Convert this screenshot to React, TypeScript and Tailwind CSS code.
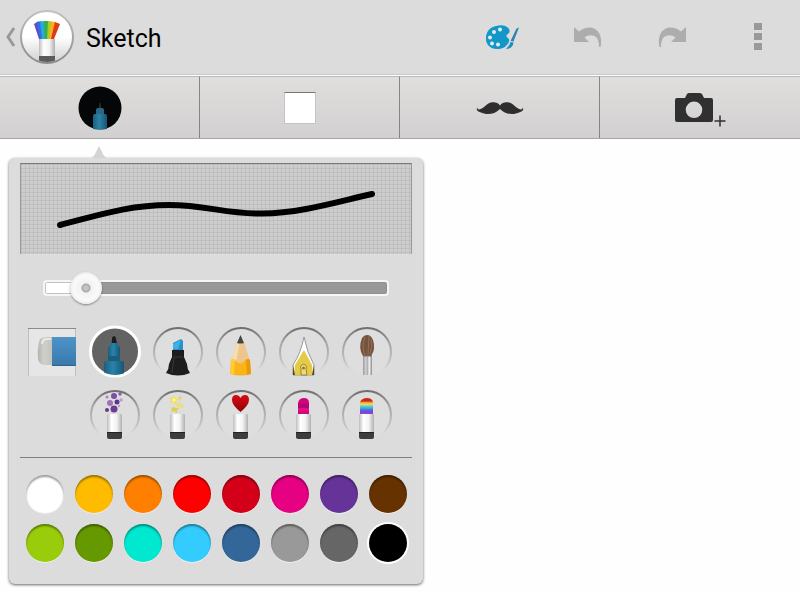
import { useState } from 'react'
import type { CSSProperties, ReactNode } from 'react'
import clsx from 'clsx'

const COLORS = [
  { name: 'White', hex: '#ffffff' },
  { name: 'Amber', hex: '#ffbb00' },
  { name: 'Orange', hex: '#ff8000' },
  { name: 'Red', hex: '#ff0000' },
  { name: 'Crimson', hex: '#d4001a' },
  { name: 'Magenta', hex: '#e60082' },
  { name: 'Purple', hex: '#663399' },
  { name: 'Brown', hex: '#663300' },
  { name: 'Lime', hex: '#99cc0a' },
  { name: 'Green', hex: '#669900' },
  { name: 'Turquoise', hex: '#00e8d0' },
  { name: 'Sky blue', hex: '#33ccff' },
  { name: 'Blue', hex: '#336699' },
  { name: 'Light gray', hex: '#999999' },
  { name: 'Dark gray', hex: '#666666' },
  { name: 'Black', hex: '#000000' },
]

// White handle shared by all the effect brushes
function Cap() {
  return (
    <>
      <rect x="17" y="24" width="15" height="19" rx="1" fill="url(#cap)" />
      <path d="M17 42h15v5q0 2-2 2H19q-2 0-2-2Z" fill="#3d3d3d" />
      <path d="M17 42h15v1H17z" fill="#222" />
    </>
  )
}

const TOOLS: { id: string; label: string; art: ReactNode }[] = [
  {
    id: 'pen',
    label: 'Pen',
    art: (
      <g clipPath="url(#round)">
        <path d="M21.500 17 22.200 10.500Q24 7.500 25.800 10.500L27 17Z" fill="#1b1b1f" />
        <path d="M18 21V20L20 19V16H28V19L30 20V34H18Z" fill="url(#teal)" />
        <path d="M18 29h12v5H18z" fill="#1a5e7c" />
        <path d="M14 50V36Q14 34 16 34H32Q34 34 34 36V50Z" fill="url(#teal)" />
      </g>
    ),
  },
  {
    id: 'highlighter',
    label: 'Highlighter',
    art: (
      <>
        <path d="M20 23V16L28 12L30 14V23Z" fill="#2590cb" />
        <path d="M20 17L28 13L25 22H20Z" fill="#3fb0e6" />
        <path d="M19 23H31V30L34 37Q34 42 37 46Q25 51 13 46Q16 42 16 37L19 30Z" fill="#1d1d1d" />
        <path d="M20 30H30M21 31L19 46" fill="none" stroke="#3a3a3a" />
      </>
    ),
  },
  {
    id: 'pencil',
    label: 'Pencil',
    art: (
      <>
        <path d="M21 15L15 35L20 38L34 34L28 15Z" fill="#ecc68d" />
        <path d="M24 15H21L15 35H20Z" fill="#f6dcae" />
        <path d="M24.500 8L28 16Q24 17 21 16Z" fill="#444" />
        <path d="M15 33Q17 31 20 34Q24 39 28 34Q31 31 34 33L35 47Q25 50 14 47Z" fill="#fbb415" />
        <path d="M30 33Q32 31 34 33L35 47L31 48Z" fill="#e99a0c" />
        <path d="M15 33Q17 31 19 33L18 48L14 47Z" fill="#ffca3c" />
      </>
    ),
  },
  {
    id: 'nib',
    label: 'Fountain pen',
    art: (
      <>
        <path d="M25 10Q28 26 35 38V48H14V38Q22 26 25 10Z" fill="#fff" stroke="#777" strokeWidth="0.700" />
        <path d="M25 23L33 38L34 48H15L16 38Z" fill="#e5cb45" />
        <path d="M14 38L16 48H14ZM35 38L33 48H35Z" fill="#554a1d" />
        <path d="M22 42a3 3 0 1 1 5 0l1 6h-6Z" fill="#f1dc74" stroke="#8d7c3a" strokeWidth="0.900" />
        <circle cx="24.500" cy="41" r="1.500" fill="#8a7a3c" />
      </>
    ),
  },
  {
    id: 'brush',
    label: 'Paint brush',
    art: (
      <>
        <path d="M21 28H30V48H21Z" fill="url(#metal)" />
        <path d="M25 8Q29 8 31 13Q34 22 29 29H21Q16 21 20 11Q22 8 25 8Z" fill="#76533d" />
        <path d="M23 10Q19 19 23 28M27 9L26 28M29 12Q31 20 28 27" fill="none" stroke="#987360" strokeWidth="0.900" />
        <path d="M21 29H30" stroke="#777" />
      </>
    ),
  },
  {
    id: 'bubbles',
    label: 'Bubbles',
    art: (
      <>
        <circle cx="24" cy="6" r="3" fill="#7d4fa0" />
        <circle cx="20" cy="13" r="3" fill="#9b74b8" />
        <circle cx="27" cy="12" r="2.500" fill="#5f3289" />
        <circle cx="24" cy="19" r="3.500" fill="#6b3b95" />
        <circle cx="17" cy="7" r="1.500" fill="#a585bd" />
        <circle cx="30" cy="4" r="1.700" fill="#8a5faa" />
        <circle cx="31" cy="10" r="1.700" fill="#b89fcb" />
        <circle cx="17" cy="20" r="2" fill="#673a87" />
        <circle cx="29" cy="16" r="1.200" fill="#b89fcb" />
        <Cap />
      </>
    ),
  },
  {
    id: 'stars',
    label: 'Stars',
    art: (
      <>
        <path d="M21 5L22.500 8L26 9L23 11L23 15L20 12L17 13L18 10L16 7L19 8Z" fill="#efe25c" />
        <path d="M27 5L28 7L30 8L28 9L27 11L26 9L24 8L26 7Z" fill="#e2d67e" />
        <path d="M25 12L26 14L29 13L30 15L32 16L29 18L27 17L24 19L24 16L22 14Z" fill="#e9df7c" />
        <path d="M21 16L22 18L26 18L24 20L24 23L21 21L18 22L19 19L17 17L20 18Z" fill="#ded04d" />
        <circle cx="21" cy="10" r="1.500" fill="#fdf9a8" />
        <Cap />
      </>
    ),
  },
  {
    id: 'hearts',
    label: 'Hearts',
    art: (
      <>
        <path d="M24.500 22Q16 15 16 10Q16 5 20 5Q23 5 24.500 8Q26 5 29 5Q33 5 33 10Q33 15 24.500 22Z" fill="url(#heart)" />
        <Cap />
      </>
    ),
  },
  {
    id: 'lipstick',
    label: 'Lipstick',
    art: (
      <>
        <path d="M19 25V13Q20 8 25 8Q30 8 30 13V25Z" fill="#d0067d" />
        <path d="M19 13Q24 15 30 13V18H19Z" fill="#b80470" />
        <path d="M19 18H30V21H19Z" fill="#e01082" />
        <Cap />
      </>
    ),
  },
  {
    id: 'rainbow',
    label: 'Rainbow',
    art: (
      <>
        <path d="M18 25V12Q20 8 25 8Q30 8 31 12V25Z" fill="url(#rainbow)" />
        <Cap />
      </>
    ),
  },
]

// Gradients and clips used by every icon on the page
function Defs() {
  return (
    <svg className="absolute size-0" aria-hidden="true">
      <defs>
        <clipPath id="round"><circle cx="25" cy="24" r="24" /></clipPath>
        <clipPath id="badge"><circle cx="27" cy="27" r="25" /></clipPath>
        <linearGradient id="ring" x1="0" y1="0" x2="0" y2="1">
          <stop offset="0" stopColor="#6e6e6e" />
          <stop offset="0.300" stopColor="#a4a4a4" />
          <stop offset="0.650" stopColor="#bdbdbd" />
          <stop offset="0.880" stopColor="#dcdcdc" />
        </linearGradient>
        <linearGradient id="teal">
          <stop offset="0" stopColor="#1b5f80" />
          <stop offset="0.450" stopColor="#2a83a8" />
          <stop offset="1" stopColor="#175574" />
        </linearGradient>
        <linearGradient id="cap">
          <stop offset="0" stopColor="#bdbdbd" />
          <stop offset="0.300" stopColor="#fff" />
          <stop offset="0.650" stopColor="#f2f2f2" />
          <stop offset="1" stopColor="#b0b0b0" />
        </linearGradient>
        <linearGradient id="metal">
          <stop offset="0" stopColor="#9a9a9a" />
          <stop offset="0.300" stopColor="#cfcfcf" />
          <stop offset="0.500" stopColor="#b3b3b3" />
          <stop offset="0.700" stopColor="#f2f2f2" />
          <stop offset="1" stopColor="#8a8a8a" />
        </linearGradient>
        <linearGradient id="heart" x1="0" y1="0" x2="0" y2="1">
          <stop offset="0" stopColor="#d90a12" />
          <stop offset="1" stopColor="#8e0308" />
        </linearGradient>
        <linearGradient id="rainbow" x1="0" y1="0" x2="0" y2="1">
          <stop offset="0.180" stopColor="#c9281c" />
          <stop offset="0.250" stopColor="#f5952a" />
          <stop offset="0.360" stopColor="#f3df57" />
          <stop offset="0.480" stopColor="#5cd3c4" />
          <stop offset="0.620" stopColor="#3d9de8" />
          <stop offset="0.750" stopColor="#6a4fd8" />
          <stop offset="1" stopColor="#8a45cf" />
        </linearGradient>
        <linearGradient id="badgeFill" x1="0" y1="0" x2="0" y2="1">
          <stop offset="0.500" stopColor="#fff" />
          <stop offset="1" stopColor="#cfcfcf" />
        </linearGradient>
        <linearGradient id="badgeRing" x1="0" y1="0" x2="0" y2="1">
          <stop offset="0" stopColor="#c0c0c0" />
          <stop offset="1" stopColor="#8c8c8c" />
        </linearGradient>
        <linearGradient id="eraser" x1="0" y1="0" x2="0" y2="1">
          <stop offset="0" stopColor="#4d94c8" />
          <stop offset="1" stopColor="#3a78ab" />
        </linearGradient>
        <linearGradient id="rubber">
          <stop offset="0" stopColor="#b4b4af" />
          <stop offset="0.400" stopColor="#d0d0cb" />
          <stop offset="1" stopColor="#c2c2bd" />
        </linearGradient>
      </defs>
    </svg>
  )
}

function Logo() {
  return (
    <svg width="54" height="54" viewBox="0 0 54 54" aria-hidden="true">
      <circle cx="27" cy="27" r="26" fill="url(#badgeFill)" stroke="url(#badgeRing)" strokeWidth="2" />
      <g clipPath="url(#badge)">
        <path d="M19 29L14 14L18 11.500L23 29Z" fill="#6a45c4" />
        <path d="M20 29L16.500 12L21 11L25 29Z" fill="#2f6fe0" />
        <path d="M22 29L20 11.500L25 11L27 29Z" fill="#27a9dc" />
        <path d="M25 29L24 11H29L29 29Z" fill="#38ae49" />
        <path d="M27 29L28 11L32 11.500L31 29Z" fill="#a7ca30" />
        <path d="M29 29L31 11.500L36 12L33 29Z" fill="#f6b217" />
        <path d="M31 29L35 12L40 14L34 29Z" fill="#dd3b18" />
        <rect x="19" y="29" width="16" height="18" fill="url(#cap)" />
        <rect x="19" y="46" width="16" height="8" fill="#5b5b5b" />
      </g>
    </svg>
  )
}

function PaletteIcon() {
  return (
    <svg width="35" height="26" viewBox="0 0 35 26" aria-hidden="true">
      <path
        d="M14 1.500C20 .5 25 4 24.500 7.500C24.500 10 21 10 21.500 12.500C22 14 25 14 24 17.500C22 22.500 18 25 12 25C5 25 .5 20 1 14C1 7 6 2 14 1.500Z"
        fill="#1396c8"
      />
      <g fill="#e2eef3">
        <circle cx="15" cy="5.500" r="2" />
        <circle cx="9" cy="8" r="2" />
        <circle cx="5" cy="13.500" r="2" />
        <circle cx="7" cy="19.500" r="2" />
        <circle cx="13" cy="20.500" r="2" />
      </g>
      <path d="M34 3.500L28.500 17.500L25.500 17L31.500 4.500Z" fill="#2b85b0" />
      <path d="M25.500 18L28.500 18.500Q28 24.500 21 25Q24.500 22 25.500 18Z" fill="#1a8fc0" />
    </svg>
  )
}

function UndoIcon({ flip }: { flip?: boolean }) {
  return (
    <svg width="29" height="24" viewBox="0 0 29 24" className={clsx(flip && '-scale-x-100')} aria-hidden="true">
      <path
        d="M1 2L6 6.500C10 3 14 2 18 2.500C25 3.500 30 11 27.500 22H26C26 15 24 11 19 10.500C16 10 14 11 11.500 12.500L16 17H1Z"
        fill="#adadad"
      />
    </svg>
  )
}

function MenuIcon() {
  return (
    <svg width="8" height="28" viewBox="0 0 8 28" fill="#999" aria-hidden="true">
      <rect width="8" height="7" />
      <rect y="10" width="8" height="7" />
      <rect y="20" width="8" height="7" />
    </svg>
  )
}

function MustacheIcon() {
  return (
    <svg width="48" height="14" viewBox="0 0 48 14" fill="#2e2e2e" aria-hidden="true">
      <path d="M24 4.500C22 1.500 19 1 15 1.500C10 2.500 8 8 3 8.500C1.500 8 1 7.500 1.500 6C0 8 .5 10 5 11.500C9 13.500 18 14.500 24 8C30 14.500 39 13.500 43 11.500C47.500 10 48 8 46.500 6C47 7.500 46.500 8 45 8.500C40 8 38 2.500 33 1.500C29 1 26 1.500 24 4.500Z" />
    </svg>
  )
}

function CameraIcon() {
  return (
    <svg width="53" height="38" viewBox="0 -3 53 38" aria-hidden="true">
      <path
        fillRule="evenodd"
        fill="#303030"
        d="M3 6H11L13 2Q14 1 15 1H25Q27 1 28 2L30 6H37Q39 6 39 8V28Q39 30 37 30H3Q1 30 1 28V8Q1 6 3 6ZM20 9.500A8.300 8.300 0 1 0 20 26.100A8.300 8.300 0 1 0 20 9.500Z"
      />
      <path d="M46 23.500V34.500M40.500 29H51.500" stroke="#303030" strokeWidth="1.500" />
    </svg>
  )
}

function ActivePenIcon() {
  return (
    <svg width="44" height="44" viewBox="0 0 44 44" aria-hidden="true">
      <circle cx="22" cy="22" r="21.500" fill="#050607" />
      <path d="M21 22L21.500 17H22.500L23 22Z" fill="#333" />
      <path d="M18 28V24Q18 22 20 22H24Q26 22 26 24V28Z" fill="#2b6886" />
      <path d="M15 43V30Q15 28 17 28H27Q29 28 29 30V43Q22 44 15 43Z" fill="url(#teal)" />
    </svg>
  )
}

function ToolButton({ label, selected, onClick, first, children }: {
  label: string
  selected: boolean
  onClick: () => void
  first?: boolean
  children: ReactNode
}) {
  return (
    <button
      type="button"
      aria-label={label}
      aria-pressed={selected}
      onClick={onClick}
      className={clsx('size-[50px] cursor-pointer', first && 'col-start-2')}
    >
      <svg width="50" height="50" viewBox="0 0 50 50" className="overflow-visible" aria-hidden="true">
        {selected ? (
          <circle cx="25" cy="24.500" r="24.500" fill="#636363" stroke="#fff" strokeWidth="3" />
        ) : (
          <circle cx="25" cy="25" r="24" fill="#dedede" stroke="url(#ring)" strokeWidth="2" />
        )}
        {children}
      </svg>
    </button>
  )
}

function SizeSlider({ value, onChange }: { value: number; onChange: (v: number) => void }) {
  return (
    <input
      type="range"
      aria-label="Brush size"
      min={0}
      max={100}
      value={value}
      onChange={e => onChange(Number(e.target.value))}
      style={{ '--fill': `${value + 4}%` } as CSSProperties}
      className="mx-[23px] mt-[18px] block h-8 cursor-pointer appearance-none bg-transparent [&::-webkit-slider-runnable-track]:h-4 [&::-webkit-slider-runnable-track]:rounded [&::-webkit-slider-runnable-track]:border-2 [&::-webkit-slider-runnable-track]:border-[#f6f6f6] [&::-webkit-slider-runnable-track]:bg-[linear-gradient(to_right,#fff_var(--fill),#999_var(--fill))] [&::-webkit-slider-runnable-track]:shadow-[inset_0_0_0_1px_#8a8a8a80] [&::-webkit-slider-thumb]:-mt-[10px] [&::-webkit-slider-thumb]:size-8 [&::-webkit-slider-thumb]:appearance-none [&::-webkit-slider-thumb]:rounded-full [&::-webkit-slider-thumb]:bg-[radial-gradient(circle,#c4c4c4_2px,#a6a6a6_4px,#f2f2f2_5px,#fafafa_13px,#e8e8e8_16px)] [&::-webkit-slider-thumb]:shadow-[0_1px_2px_#00000066]"
    />
  )
}

function BrushPanel() {
  const [tool, setTool] = useState('pen')
  const [color, setColor] = useState('#000000')
  const [size, setSize] = useState(8)

  return (
    <section
      aria-label="Brush settings"
      className="relative mt-[19px] ml-[9px] flex w-[414px] max-w-full flex-col rounded-md bg-[#dcdcdc] px-[11px] pt-[5px] pb-[17px] shadow-[0_1px_3px_#00000099]"
    >
      <svg width="16" height="12" viewBox="0 0 16 12" className="absolute -top-3 left-[82px]" aria-hidden="true">
        <path d="M0 12Q3 11 5 6L8 0L11 6Q13 11 16 12Z" fill="#d4d4d4" />
      </svg>

      {/* Stroke preview */}
      <div className="border-t border-r border-l border-t-[#777] border-r-[#999] border-l-[#999] bg-[#cdcdcd] bg-[linear-gradient(#0000000f_1px,transparent_1px),linear-gradient(to_right,#0000000f_1px,transparent_1px)] bg-[size:4px_4px]">
        <svg viewBox="0 0 390 90" className="block w-full" aria-label="Stroke preview" role="img">
          <path
            d="M39 61C72 53 105 41 148 41C185 41 205 50 241 49.500C280 49 315 38 351 30"
            fill="none"
            stroke={color}
            strokeWidth={Math.max(1, size - 2)}
            strokeLinecap="round"
          />
        </svg>
      </div>

      <SizeSlider value={size} onChange={setSize} />

      {/* Tools */}
      <div className="mt-[23px] ml-[7px] grid grid-cols-[repeat(6,50px)] gap-[13px]">
        <button
          type="button"
          aria-label="Eraser"
          aria-pressed={tool === 'eraser'}
          onClick={() => setTool('eraser')}
          className={clsx('size-[50px] cursor-pointer', tool === 'eraser' && 'outline-2 outline-white')}
        >
          <svg width="50" height="50" viewBox="0 0 50 50" aria-hidden="true">
            <rect x="1" y="1" width="48" height="48" fill="#e6e6e6" />
            <path d="M1.500 49V1.500H48.500V49" fill="none" stroke="#c0c0c0" />
            <path d="M1 1.500H49" stroke="#8a8a8a" />
            <path d="M26 10V38H19Q12 38 11 32Q10 24 12 15Q13 10 19 10Z" fill="url(#rubber)" />
            <path d="M24 12H19Q15 13 15 17" fill="none" stroke="#e8e8e4" strokeWidth="2" />
            <rect x="25" y="10" width="24" height="29" fill="url(#eraser)" />
            <path d="M25 38H49V39H25Z" fill="#2e638e" />
          </svg>
        </button>
        {TOOLS.map((t, i) => (
          <ToolButton
            key={t.id}
            label={t.label}
            selected={tool === t.id}
            first={i === 5}
            onClick={() => setTool(t.id)}
          >
            {t.art}
          </ToolButton>
        ))}
      </div>

      <hr className="mt-[17px] border-t border-[#808080]" />

      {/* Colors */}
      <div role="radiogroup" aria-label="Color" className="mt-[11px] grid grid-cols-8">
        {COLORS.map(c => (
          <label key={c.hex} className="flex h-[49px] items-center justify-center">
            <input
              type="radio"
              name="color"
              aria-label={c.name}
              checked={color === c.hex}
              onChange={() => setColor(c.hex)}
              style={{ backgroundColor: c.hex }}
              className="size-[38px] cursor-pointer appearance-none rounded-full shadow-[inset_0_2px_2px_#00000066,0_1px_0_#ffffff80] checked:shadow-[0_0_0_2px_#fff]"
            />
          </label>
        ))}
      </div>
    </section>
  )
}

const ACTIONS = [
  { label: 'Drawing tools', icon: <PaletteIcon /> },
  { label: 'Undo', icon: <UndoIcon /> },
  { label: 'Redo', icon: <UndoIcon flip /> },
  { label: 'More options', icon: <MenuIcon /> },
]

const TABS = [
  { label: 'Brush', icon: <ActivePenIcon /> },
  {
    label: 'Background',
    icon: <span className="size-8 border border-[#c4c4c4] border-t-[#777] bg-white" />,
  },
  { label: 'Stickers', icon: <MustacheIcon /> },
  { label: 'Add photo', icon: <CameraIcon /> },
]

export default function App() {
  return (
    <div className="min-h-screen bg-[#fefefe] font-[Roboto,'Liberation_Sans',sans-serif]">
      <Defs />
      <header className="flex h-[75px] items-center justify-between border-b border-[#c8c8c8] bg-[#dcdcdc]">
        <button type="button" aria-label="Back" className="flex cursor-pointer items-center gap-1 pl-1">
          <svg width="12" height="20" viewBox="0 0 12 20" aria-hidden="true">
            <path d="M10 1L4 10L10 19" fill="none" stroke="#999" strokeWidth="3" />
          </svg>
          <Logo />
        </button>
        <h1 className="ml-3 flex-1 pt-1 text-[25px] leading-8 text-black">Sketch</h1>
        <div className="flex">
          {ACTIONS.map(a => (
            <button
              key={a.label}
              type="button"
              aria-label={a.label}
              className="flex h-[74px] w-[85px] cursor-pointer items-center justify-center"
            >
              {a.icon}
            </button>
          ))}
        </div>
      </header>

      <nav className="grid h-16 grid-cols-4 border-t border-b border-t-white border-b-[#a6a6a6] bg-linear-to-b from-[#e0dfdd] to-[#d2d0d1]">
        {TABS.map(t => (
          <button
            key={t.label}
            type="button"
            aria-label={t.label}
            className="flex cursor-pointer items-center justify-center border-t border-r border-t-[#b9b9b9] border-r-[#858585] last:border-r-0"
          >
            {t.icon}
          </button>
        ))}
      </nav>

      <main>
        <BrushPanel />
      </main>
    </div>
  )
}
